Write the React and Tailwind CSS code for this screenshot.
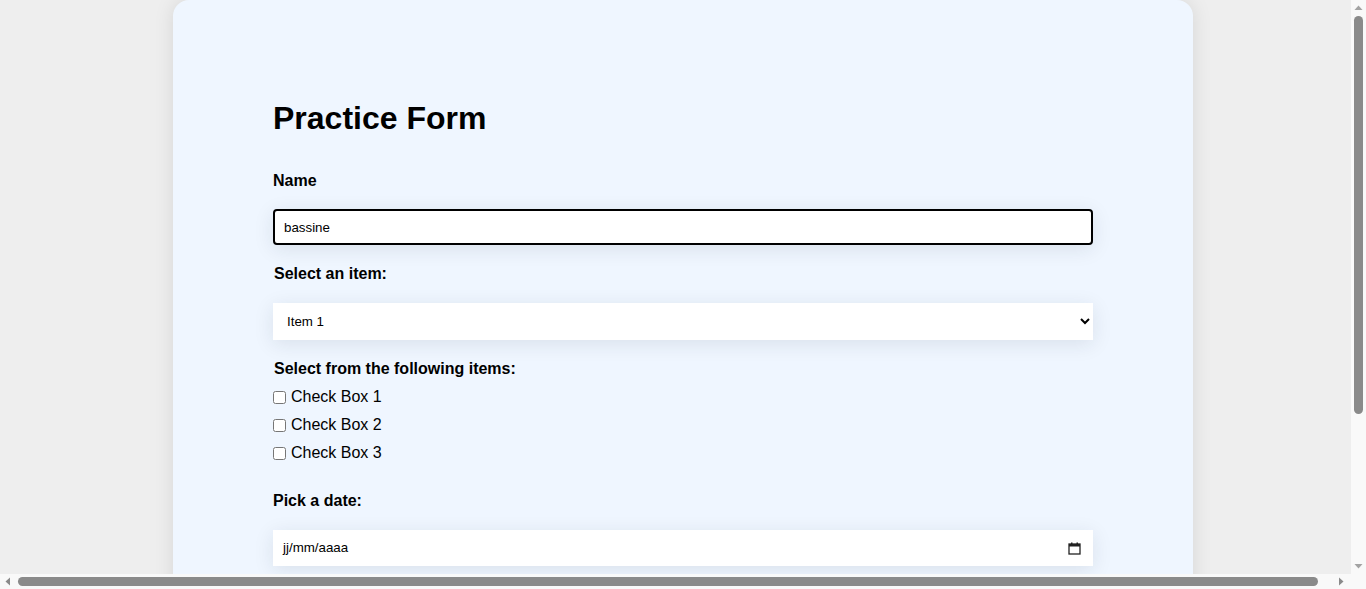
import { useState } from 'react';

const fieldShadow = 'shadow-[0_4px_20px_rgba(30,41,59,0.10)]';

const Label = ({ children, className = '' }) => (
  <div className={`text-[16px] leading-[18px] font-bold text-black ${className}`}>{children}</div>
);

const CalendarIcon = () => (
  <svg width="13" height="13" viewBox="0 0 13 13" className="mr-[2px]">
    <rect x="1" y="2" width="11" height="10" fill="none" stroke="#222" strokeWidth="1.3" />
    <rect x="1" y="2" width="11" height="2.5" fill="#222" />
    <rect x="3" y="0.5" width="1.5" height="2" fill="#222" />
    <rect x="8.5" y="0.5" width="1.5" height="2" fill="#222" />
  </svg>
);

// browser scrollbars as they show in the capture
const Scrollbars = () => (
  <>
    <div className="fixed top-0 right-0 w-[15px] h-[574px] bg-[#f9f9f9] flex flex-col items-center">
      <svg width="15" height="16" viewBox="0 0 15 16"><path d="M3.5 10 L7.5 5.5 L11.5 10 Z" fill="#a3a3a3" /></svg>
      <div className="w-[9px] h-[398px] rounded-full bg-[#8a8a8a]" />
      <div className="flex-1" />
      <svg width="15" height="16" viewBox="0 0 15 16"><path d="M3.5 6 L7.5 10.5 L11.5 6 Z" fill="#a3a3a3" /></svg>
    </div>
    <div className="fixed bottom-0 left-0 w-[1366px] h-[15px] bg-[#f9f9f9] flex items-center">
      <svg width="16" height="15" viewBox="0 0 16 15"><path d="M10 3.5 L5.5 7.5 L10 11.5 Z" fill="#8a8a8a" /></svg>
      <div className="ml-[2px] w-[1300px] h-[9px] rounded-full bg-[#8a8a8a]" />
      <div className="flex-1" />
      <svg width="16" height="15" viewBox="0 0 16 15" className="mr-[17px]"><path d="M6 3.5 L10.5 7.5 L6 11.5 Z" fill="#8a8a8a" /></svg>
    </div>
  </>
);

const App = () => {
  const [name, setName] = useState('bassine');
  const [checks, setChecks] = useState([false, false, false]);

  const toggle = (i) => setChecks(c => c.map((v, j) => (j === i ? !v : v)));

  return (
    <div className="bg-[#eeeeee] min-h-screen w-[1366px] font-['Liberation_Sans',Arial,sans-serif] text-black">
      <div className="w-[1020px] mx-auto bg-[#eff6ff] rounded-t-[16px] shadow-[0_0_20px_rgba(0,0,0,0.10)] px-[100px] pt-[100px] pb-[219px]">
        <h1 className="text-[32px] leading-[37px] font-bold">Practice Form</h1>

        <Label className="mt-[35px]">Name</Label>
        <input
          value={name}
          onChange={e => setName(e.target.value)}
          className={`mt-[19px] block w-full h-[36px] px-[9px] bg-white border-2 border-black rounded-[4px] text-[13.33px] outline-none ${fieldShadow}`}
        />

        <Label className="mt-[20px] pl-[1px]">Select an item:</Label>
        <select className={`mt-[20px] block w-full h-[37px] px-[10px] bg-white text-[13.33px] outline-none ${fieldShadow}`}>
          <option>Item 1</option>
          <option>Item 2</option>
          <option>Item 3</option>
        </select>

        <Label className="mt-[20px] pl-[1px]">Select from the following items:</Label>
        <div className="mt-[5px] flex flex-col">
          {['Check Box 1', 'Check Box 2', 'Check Box 3'].map((t, i) => (
            <label key={t} className="flex items-center h-[28px] text-[16px]">
              <input type="checkbox" checked={checks[i]} onChange={() => toggle(i)} className="m-0 w-[13px] h-[13px]" />
              <span className="ml-[5px]">{t}</span>
            </label>
          ))}
        </div>

        <Label className="mt-[25px]">Pick a date:</Label>
        <div className={`mt-[20px] flex items-center justify-between w-full h-[36px] px-[10px] bg-white text-[13.33px] ${fieldShadow}`}>
          <span>jj/mm/aaaa</span>
          <CalendarIcon />
        </div>
      </div>
      <Scrollbars />
    </div>
  );
};

export default App;
